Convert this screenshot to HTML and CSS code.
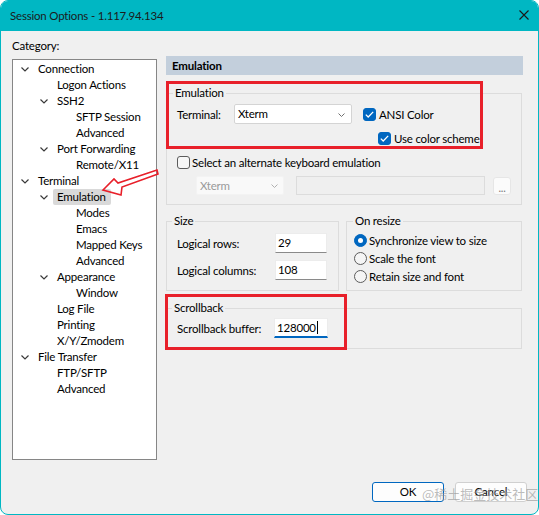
FILE: index.html
```html
<!DOCTYPE html>
<html>
<head>
<meta charset="utf-8">
<title>Session Options</title>
<link rel="stylesheet" href="styles.css">
</head>
<body>
<div class="window">
  <div class="titlebar">
    <span class="title">Session Options - 1.117.94.134</span>
    <svg class="close" width="10" height="10" viewBox="0 0 10 10"><path d="M0.5 0.5L9.5 9.5M9.5 0.5L0.5 9.5" stroke="#1a1a1a" stroke-width="1.1" fill="none"/></svg>
  </div>
  <div class="content">
    <div class="main">
      <div class="left">
        <div class="cat-label">Category:</div>
        <ul class="tree">
          <li class="row l0c"><svg class="chev" width="8" height="5" viewBox="0 0 8 5"><path d="M0.5 0.5L4 4L7.5 0.5"/></svg>Connection</li>
          <li class="row l1">Logon Actions</li>
          <li class="row l1c"><svg class="chev" width="8" height="5" viewBox="0 0 8 5"><path d="M0.5 0.5L4 4L7.5 0.5"/></svg>SSH2</li>
          <li class="row l2">SFTP Session</li>
          <li class="row l2">Advanced</li>
          <li class="row l1c"><svg class="chev" width="8" height="5" viewBox="0 0 8 5"><path d="M0.5 0.5L4 4L7.5 0.5"/></svg>Port Forwarding</li>
          <li class="row l2">Remote/X11</li>
          <li class="row l0c"><svg class="chev" width="8" height="5" viewBox="0 0 8 5"><path d="M0.5 0.5L4 4L7.5 0.5"/></svg>Terminal</li>
          <li class="row l1c"><svg class="chev" width="8" height="5" viewBox="0 0 8 5"><path d="M0.5 0.5L4 4L7.5 0.5"/></svg><span class="sel">Emulation</span></li>
          <li class="row l2">Modes</li>
          <li class="row l2">Emacs</li>
          <li class="row l2">Mapped Keys</li>
          <li class="row l2">Advanced</li>
          <li class="row l1c"><svg class="chev" width="8" height="5" viewBox="0 0 8 5"><path d="M0.5 0.5L4 4L7.5 0.5"/></svg>Appearance</li>
          <li class="row l2">Window</li>
          <li class="row l1">Log File</li>
          <li class="row l1">Printing</li>
          <li class="row l1">X/Y/Zmodem</li>
          <li class="row l0c"><svg class="chev" width="8" height="5" viewBox="0 0 8 5"><path d="M0.5 0.5L4 4L7.5 0.5"/></svg>File Transfer</li>
          <li class="row l1">FTP/SFTP</li>
          <li class="row l1">Advanced</li>
        </ul>
      </div>
      <div class="right">
        <div class="page-header">Emulation</div>
        <fieldset class="group emu">
          <legend class="lg-emu">Emulation</legend>
          <div class="emu-row1">
            <span class="lbl-term">Terminal:</span>
            <div class="combo"><span>Xterm</span><svg class="combo-chev" width="7" height="4" viewBox="0 0 7 4"><path d="M0.5 0.5L3.5 3.5L6.5 0.5"/></svg></div>
            <span class="cb checked cb-ansi"><svg width="9" height="7" viewBox="0 0 9 7"><path d="M0.8 3.6L3.2 6L8.2 0.9"/></svg></span>
            <span class="cb-label">ANSI Color</span>
          </div>
          <div class="emu-row2">
            <span class="cb checked"><svg width="9" height="7" viewBox="0 0 9 7"><path d="M0.8 3.6L3.2 6L8.2 0.9"/></svg></span>
            <span class="cb-label">Use color scheme</span>
          </div>
          <div class="emu-row3">
            <span class="cb"></span>
            <span class="cb-label2">Select an alternate keyboard emulation</span>
          </div>
          <div class="emu-row4">
            <div class="combo disabled"><span>Xterm</span><svg class="combo-chev" width="7" height="4" viewBox="0 0 7 4"><path d="M0.5 0.5L3.5 3.5L6.5 0.5"/></svg></div>
            <div class="dis-input"></div>
            <div class="dots">...</div>
          </div>
        </fieldset>
        <div class="pair">
          <fieldset class="group size">
            <legend class="lg-size">Size</legend>
            <div class="frow"><span class="flabel">Logical rows:</span><span class="field">29</span></div>
            <div class="frow gap"><span class="flabel">Logical columns:</span><span class="field">108</span></div>
          </fieldset>
          <fieldset class="group resize">
            <legend class="lg-resize">On resize</legend>
            <div class="rrow"><span class="radio on"></span><span class="rlabel">Synchronize view to size</span></div>
            <div class="rrow"><span class="radio"></span><span class="rlabel">Scale the font</span></div>
            <div class="rrow"><span class="radio"></span><span class="rlabel">Retain size and font</span></div>
          </fieldset>
        </div>
        <fieldset class="group scroll">
          <legend class="lg-size">Scrollback</legend>
          <div class="frow"><span class="flabel2">Scrollback buffer:</span><span class="field focus">128000<span class="caret"></span></span></div>
        </fieldset>
      </div>
    </div>
    <div class="footer">
      <button class="btn primary">OK</button>
      <button class="btn">Cancel</button>
    </div>
  </div>
  <div class="mark mark1"></div>
  <div class="mark mark2"></div>
  <svg class="arrow" width="62" height="32" viewBox="0 0 62 32"><path d="M3 22L14 11L18 15L57 2L58 6L22 19L21 27Z"/></svg>
  <div class="watermark">@稀土掘金技术社区</div>
</div>
</body>
</html>
```
FILE: styles.css
```css
* { box-sizing: border-box; }
html, body { margin: 0; padding: 0; background: #ffffff; }
body { font-family: Lato, "Noto Sans", sans-serif; font-size: 11.5px; letter-spacing: -0.2px; color: #000; }

.window {
  position: relative;
  width: 539px;
  height: 515px;
  border: 1px solid #00b7c3;
  border-radius: 8px;
  background: #f0f0f0;
  display: flex;
  flex-direction: column;
  overflow: hidden;
}
.titlebar {
  flex: none;
  height: 30px;
  background: #00b7c3;
  display: flex;
  align-items: center;
  justify-content: space-between;
  padding: 0 9px 2px 9px;
}
.title { color: #1b1b1b; }
.close { display: block; }

.content {
  flex: 1;
  display: flex;
  flex-direction: column;
  padding: 8px 11px 12px 11px;
}
.main {
  display: grid;
  grid-template-columns: 145px 357px;
  column-gap: 9px;
  align-items: start;
}
.cat-label { height: 14px; line-height: 14px; margin-bottom: 6px; }
.tree {
  list-style: none;
  margin: 0;
  padding: 1px 0 0 0;
  height: 401px;
  background: #fff;
  border: 1px solid #868686;
}
.row {
  height: 16px;
  line-height: 16px;
  display: flex;
  align-items: center;
  white-space: nowrap;
}
.chev { flex: none; margin-right: 9px; }
.chev path { stroke: #3a3a3a; stroke-width: 1.2; fill: none; }
.l0c { padding-left: 8px; }
.l1c { padding-left: 27px; }
.l1 { padding-left: 44px; }
.l2 { padding-left: 63px; }
.sel {
  background: #d9d9d9;
  margin-left: -4px;
  padding: 0 5px 0 4px;
  height: 16px;
  line-height: 16px;
  border-radius: 2px;
}

.right { padding-top: 17px; }
.page-header {
  height: 19px;
  line-height: 19px;
  background: #c3cfdc;
  font-weight: bold;
  padding-left: 6px;
}
.group {
  margin: 0;
  border: 1px solid #dcdcdc;
  min-width: 0;
}
.group legend { padding: 0 2px; line-height: 14px; height: 14px; }
.lg-emu { margin-left: -4px; }
.lg-size { margin-left: -5px; }
.lg-resize { margin-left: -1px; }

.emu { margin-top: 11px; width: 356px; padding: 4px 10px 9px 10px; }
.emu-row1 { display: flex; align-items: center; height: 20px; }
.lbl-term { width: 57px; flex: none; }
.combo {
  position: relative;
  width: 118px;
  height: 20px;
  background: #fff;
  border: 1px solid #d4d4d4;
  border-radius: 2px;
  padding-left: 3px;
  line-height: 18px;
  flex: none;
}
.combo-chev { position: absolute; right: 6px; top: 8px; }
.combo-chev path { stroke: #707070; stroke-width: 1; fill: none; }
.cb {
  width: 13px;
  height: 13px;
  flex: none;
  border-radius: 3px;
  border: 1px solid #5c5c5c;
  background: #f7f7f7;
  display: flex;
  align-items: center;
  justify-content: center;
}
.cb.checked { background: #0067c0; border-color: #0067c0; }
.cb svg path { stroke: #fff; stroke-width: 1.3; fill: none; }
.cb-ansi { margin-left: 11px; }
.cb-label { margin-left: 3px; }
.cb-label2 { margin-left: 2px; }
.emu-row2 { display: flex; align-items: center; height: 14px; margin-top: 7px; padding-left: 201px; }
.emu-row3 { display: flex; align-items: center; height: 14px; margin-top: 10px; }
.emu-row4 { display: flex; align-items: center; height: 19px; margin-top: 7px; padding-left: 19px; }
.combo.disabled {
  width: 88px;
  height: 19px;
  background: #f9f9f9;
  border-color: #f3f3f3;
  color: #9a9a9a;
  line-height: 17px;
}
.combo.disabled .combo-chev { top: 7px; right: 5px; }
.combo.disabled .combo-chev path { stroke: #b0b0b0; }
.dis-input {
  width: 189px;
  height: 19px;
  margin-left: 12px;
  background: #efefef;
  border: 1px solid #dcdcdc;
  flex: none;
}
.dots {
  width: 18px;
  height: 18px;
  margin-left: 8px;
  background: #fbfbfb;
  border: 1px solid #e6e6e6;
  border-radius: 3px;
  color: #7a7a7a;
  font-size: 11px;
  line-height: 19px;
  text-align: center;
  flex: none;
}

.pair { display: flex; gap: 7px; margin-top: 9px; }
.size { width: 173px; padding: 5px 10px 10px 10px; }
.resize { width: 176px; padding: 5px 7px 7px 7px; }
.frow { display: flex; align-items: center; height: 20px; }
.frow.gap { margin-top: 7px; }
.flabel { width: 98px; flex: none; }
.flabel2 { width: 97px; flex: none; }
.field {
  width: 52px;
  height: 20px;
  background: #fff;
  border: 1px solid #ececec;
  border-bottom-color: #8a8a8a;
  padding-left: 2px;
  line-height: 18px;
  flex: none;
  display: flex;
  align-items: center;
}
.field.focus { width: 54px; border-bottom: 2px solid #0067c0; line-height: 17px; }
.caret { display: inline-block; width: 1px; height: 13px; background: #000; margin-left: 1px; }
.rrow { display: flex; align-items: center; height: 14px; }
.rrow + .rrow { margin-top: 4px; }
.radio {
  width: 13px;
  height: 13px;
  border-radius: 50%;
  border: 1px solid #5c5c5c;
  background: #f5f5f5;
  flex: none;
  display: flex;
  align-items: center;
  justify-content: center;
}
.radio.on { background: #0067c0; border-color: #0067c0; }
.radio.on::after {
  content: "";
  width: 5px;
  height: 5px;
  border-radius: 50%;
  background: #fff;
}
.rlabel { margin-left: 2px; }

.scroll { margin-top: 10px; width: 356px; padding: 3px 10px 10px 10px; }

.footer {
  margin-top: auto;
  display: flex;
  justify-content: flex-end;
  gap: 11px;
}
.btn {
  width: 72px;
  height: 20px;
  font-family: inherit;
  font-size: 11.5px;
  letter-spacing: -0.2px;
  color: #000;
  background: #fdfdfd;
  border: 1px solid #d0d0d0;
  border-radius: 3px;
  padding: 0;
  line-height: 18px;
}
.btn.primary { border-color: #0067c0; }

.mark { position: absolute; border: 3px solid #e8202a; }
.mark1 { left: 165px; top: 80px; width: 317px; height: 68px; }
.mark2 { left: 164px; top: 293px; width: 182px; height: 56px; }
.arrow { position: absolute; left: 99px; top: 167px; }
.arrow path { fill: none; stroke: #e8202a; stroke-width: 1.6; stroke-linejoin: miter; }
.watermark {
  position: absolute;
  left: 421px;
  top: 485px;
  font-family: "Noto Sans CJK SC", sans-serif;
  font-size: 13px;
  letter-spacing: 0;
  line-height: 16px;
  color: rgba(150, 150, 150, 0.65);
  white-space: nowrap;
}
```
